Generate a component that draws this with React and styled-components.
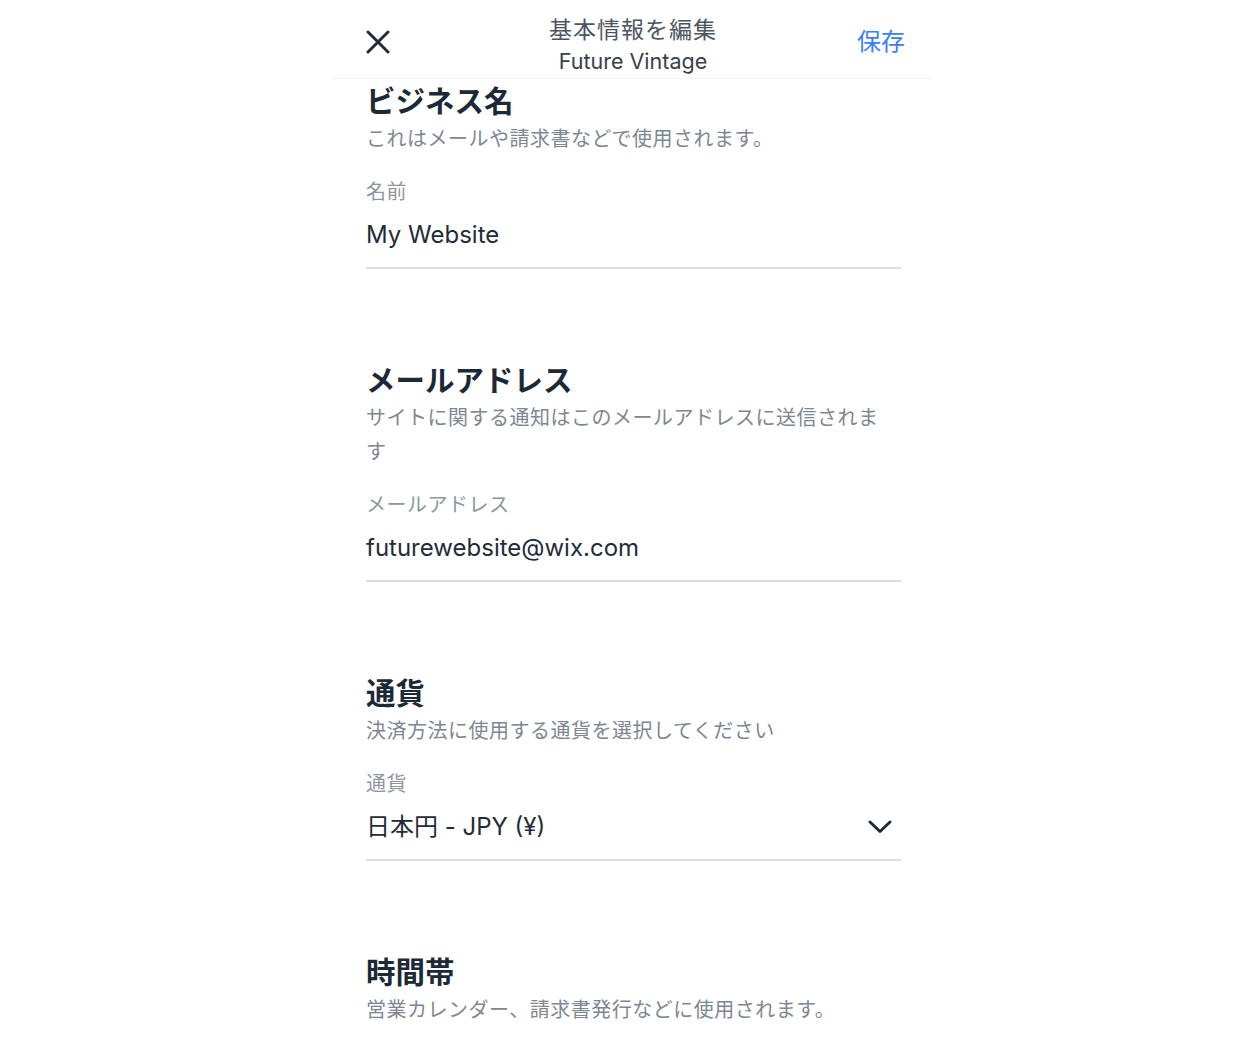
import React from "react";
import styled, { createGlobalStyle } from "styled-components";

const GlobalStyle = createGlobalStyle`
  html, body {
    margin: 0;
    padding: 0;
    background: #ffffff;
  }
  body {
    font-family: "Inter", "Noto Sans CJK JP", sans-serif;
    -webkit-font-smoothing: antialiased;
  }
`;

const Page = styled.div`
  padding-left: 333px;
`;

const Screen = styled.div`
  width: 600px;
  background: #ffffff;
`;

const Header = styled.header`
  box-sizing: border-box;
  height: 79px;
  padding-top: 6px;
  display: grid;
  grid-template-columns: 1fr auto 1fr;
  align-items: center;
  border-bottom: 1px solid #f1f2f3;
`;

const CloseButton = styled.button`
  justify-self: start;
  margin-left: 33px;
  width: 24px;
  height: 24px;
  padding: 0;
  border: 0;
  background: none;
  display: flex;
  align-items: center;
  justify-content: center;
  color: #1f2d3a;
`;

const TitleBlock = styled.div`
  padding-top: 6px;
  text-align: center;
`;

const HeaderTitle = styled.div`
  font-size: 23px;
  line-height: 32px;
  letter-spacing: 1px;
  color: #4b5561;
`;

const HeaderSubtitle = styled.div`
  font-size: 21.5px;
  line-height: 30px;
  color: #37414b;
`;

const SaveButton = styled.button`
  justify-self: end;
  margin-right: 28px;
  padding: 0;
  border: 0;
  background: none;
  font-family: inherit;
  font-size: 24px;
  line-height: 32px;
  color: #3b7ef6;
`;

const Content = styled.main`
  padding: 4px 32px 0 33px;
`;

const Section = styled.section`
  margin-bottom: 93px;
`;

const SectionTitle = styled.h2`
  margin: 0;
  font-size: 29.5px;
  line-height: 36px;
  font-weight: 700;
  color: #1c2a38;
`;

const Description = styled.p`
  margin: 3px 0 0;
  max-width: 525px;
  font-size: 20px;
  line-height: 34px;
  letter-spacing: 0.5px;
  color: #7d8792;
`;

const Label = styled.div`
  margin-top: 23px;
  font-size: 20px;
  line-height: 26px;
  letter-spacing: 0.5px;
  color: #8e97a0;
`;

const Field = styled.div`
  margin-top: 6px;
  padding: 8px 9px 16px 0;
  display: flex;
  align-items: center;
  justify-content: space-between;
  border-bottom: 2px solid #d9dde1;
  font-size: 24px;
  line-height: 32px;
  color: #1f2c39;
`;

const CloseIcon = () => (
  <svg width="24" height="24" viewBox="0 0 24 24" fill="none">
    <path d="M2 2 L22 22 M22 2 L2 22" stroke="currentColor" strokeWidth="3" strokeLinecap="round" />
  </svg>
);

const ChevronDown = () => (
  <svg width="24" height="14" viewBox="0 0 24 14" fill="none">
    <path d="M2 2 L12 11.5 L22 2" stroke="#1f2d3a" strokeWidth="3" strokeLinecap="round" strokeLinejoin="round" />
  </svg>
);

const sections = [
  {
    title: "ビジネス名",
    description: "これはメールや請求書などで使用されます。",
    label: "名前",
    value: "My Website",
  },
  {
    title: "メールアドレス",
    description: "サイトに関する通知はこのメールアドレスに送信されます",
    label: "メールアドレス",
    value: "futurewebsite@wix.com",
  },
  {
    title: "通貨",
    description: "決済方法に使用する通貨を選択してください",
    label: "通貨",
    value: "日本円 - JPY (¥)",
    select: true,
  },
  {
    title: "時間帯",
    description: "営業カレンダー、請求書発行などに使用されます。",
  },
];

export default function App() {
  return (
    <>
      <GlobalStyle />
      <Page>
        <Screen>
          <Header>
            <CloseButton aria-label="閉じる">
              <CloseIcon />
            </CloseButton>
            <TitleBlock>
              <HeaderTitle>基本情報を編集</HeaderTitle>
              <HeaderSubtitle>Future Vintage</HeaderSubtitle>
            </TitleBlock>
            <SaveButton>保存</SaveButton>
          </Header>
          <Content>
            {sections.map((s) => (
              <Section key={s.title}>
                <SectionTitle>{s.title}</SectionTitle>
                <Description>{s.description}</Description>
                {s.label && (
                  <>
                    <Label>{s.label}</Label>
                    <Field>
                      <span>{s.value}</span>
                      {s.select && <ChevronDown />}
                    </Field>
                  </>
                )}
              </Section>
            ))}
          </Content>
        </Screen>
      </Page>
    </>
  );
}
